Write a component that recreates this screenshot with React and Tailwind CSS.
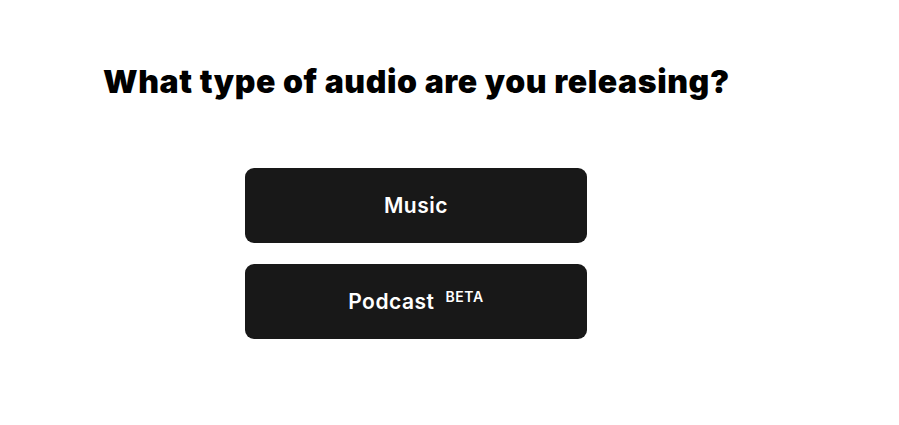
import React from 'react';

const font = { fontFamily: 'Inter, "Noto Sans", sans-serif' };

const App = () => {
  return (
    <div className="w-[899px] h-[425px] bg-white" style={font}>
      <div className="pt-[62px] pl-[103px]">
        <h1 className="text-[32px] leading-[40px] font-black tracking-[0.6px] text-black">
          What type of audio are you releasing?
        </h1>
      </div>

      <div className="mt-[66px] ml-[245px] w-[342px] flex flex-col gap-[21px]">
        <button className="h-[75px] w-full rounded-[9px] bg-[#181818] text-white text-[21px] tracking-[0.5px] font-semibold flex items-center justify-center">
          Music
        </button>
        <button className="h-[75px] w-full rounded-[9px] bg-[#181818] text-white text-[21px] tracking-[0.5px] font-semibold flex items-center justify-center">
          <span>Podcast</span>
          <span className="ml-[11px] text-[14px] tracking-[0.6px] font-semibold self-start mt-[22px]">BETA</span>
        </button>
      </div>
    </div>
  );
};

export default App;
